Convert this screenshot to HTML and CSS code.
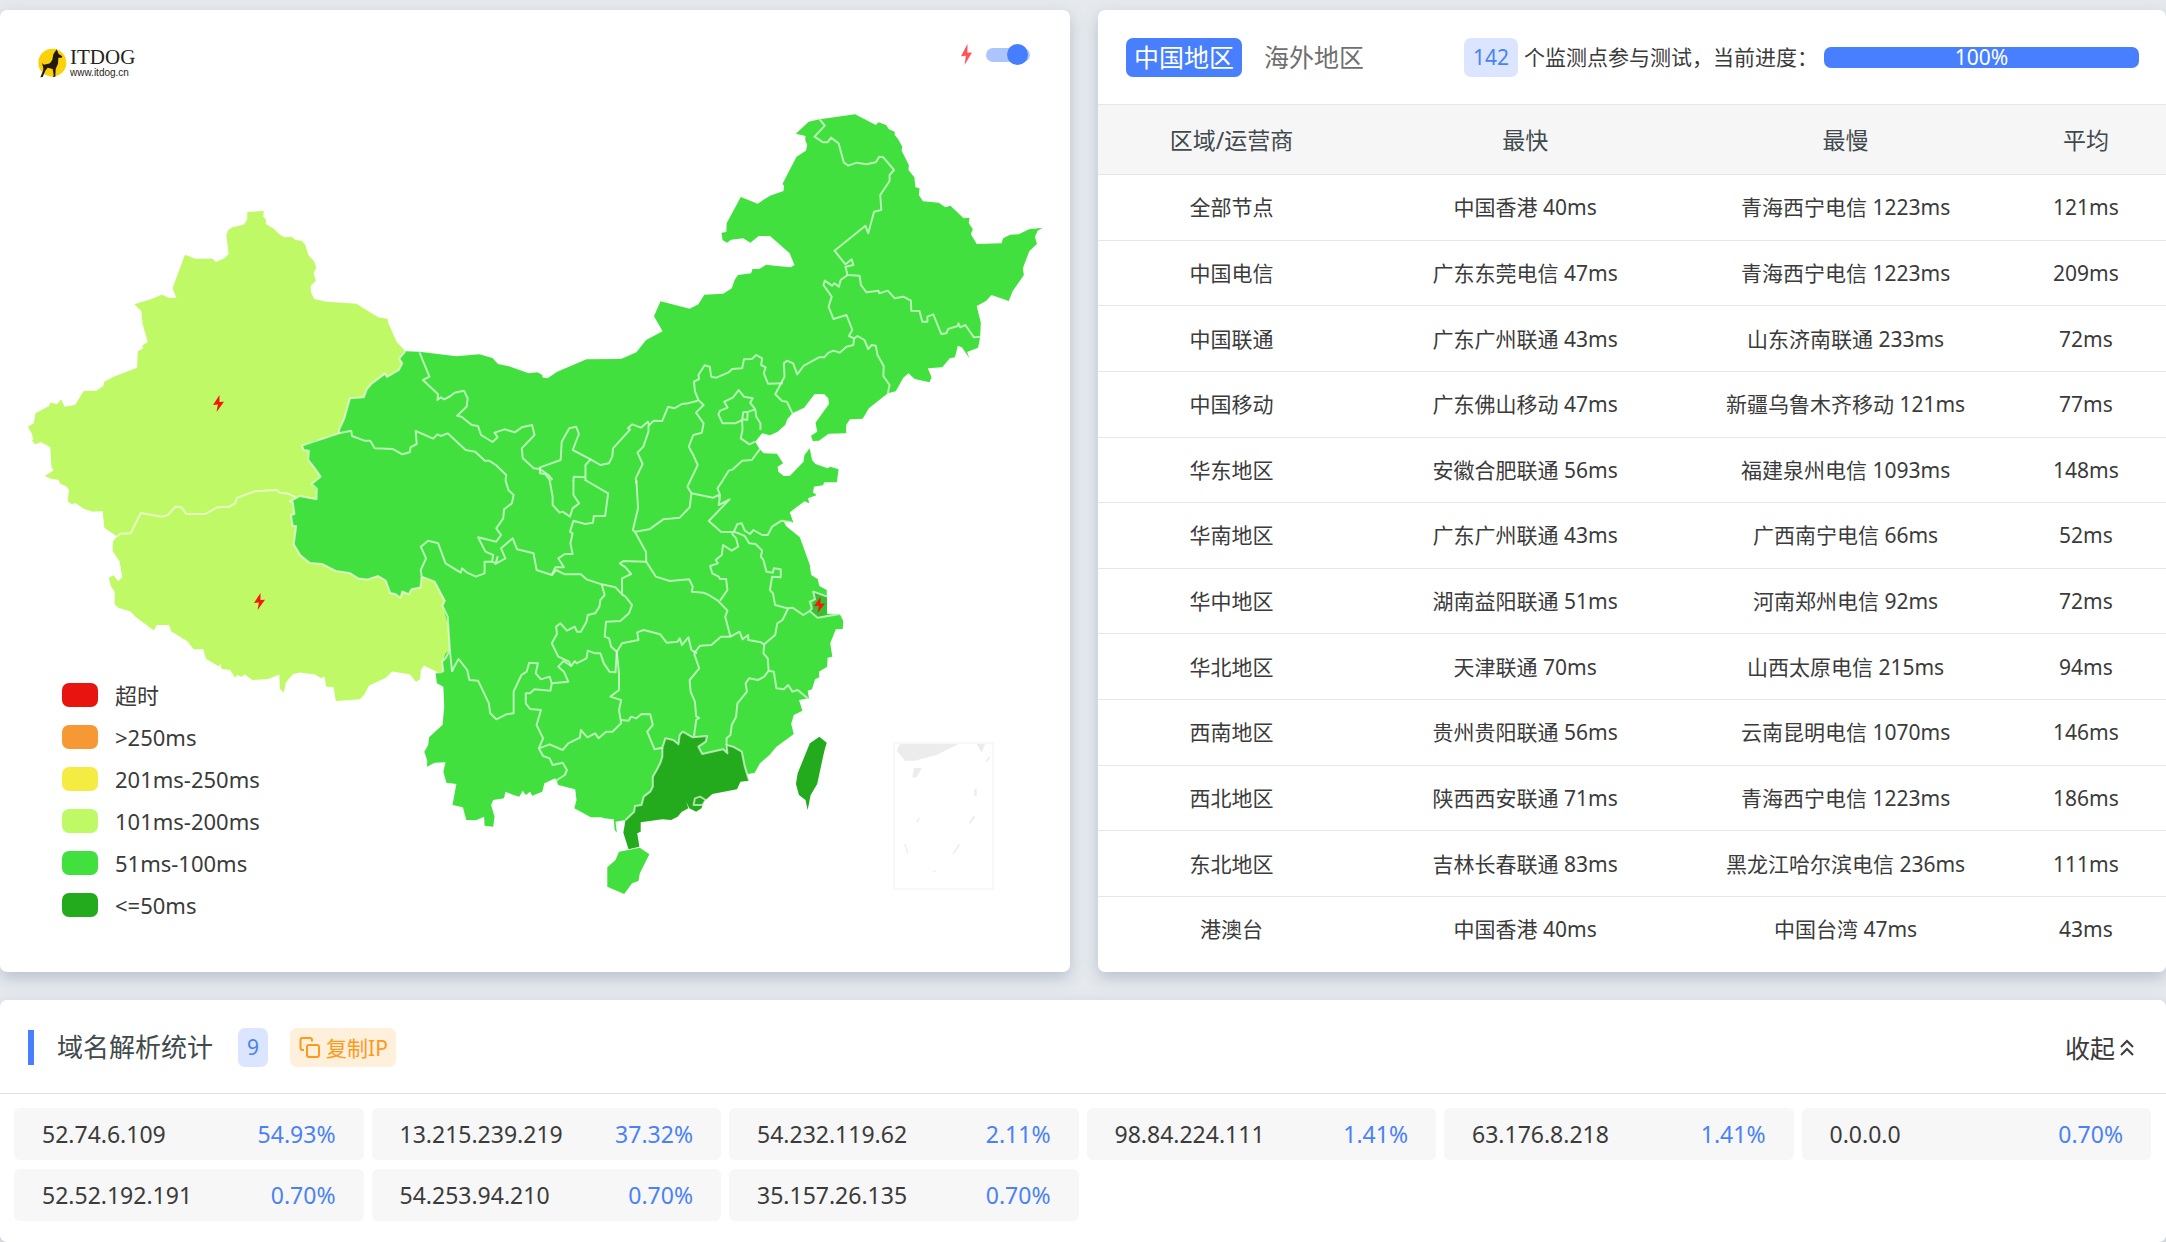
FILE: index.html
```html
<!DOCTYPE html>
<html lang="zh-CN">
<head>
<meta charset="utf-8">
<meta name="viewport" content="width=device-width, initial-scale=1">
<title>ITDOG 测速结果</title>
<link rel="stylesheet" href="styles.css">
</head>
<body>
<svg class="sprite" aria-hidden="true">
  <symbol id="bolt" viewBox="0 0 34 65" preserveAspectRatio="none"><path d="M20 0 0 38 15 36 11 65 34 26 20 27Z"/></symbol>
</svg>
<main class="page">
  <div class="top">
    <section class="card map-card">
      <svg class="map" viewBox="0 10 1070 962" role="img" aria-label="中国地区延迟地图">
        <!-- provinces at 101-200ms -->
        <g class="lime">
          <path transform="scale(.34439 .33333)" d="M718 636 766 633 764 650 772 658 772 672 795 686 810 702 825 712 848 711 858 720 876 722 886 734 895 764 912 784 918 803 911 820 917 842 902 858 903 877 912 897 948 905 1035 911 1058 926 1098 952 1125 956 1127 968 1152 1026 1177 1054 1159 1076 1168 1090 1158 1110 1124 1131 1118 1121 1080 1150 1065 1168 1056 1192 1016 1195 1000 1255 985 1288 984 1300 877 1337 882 1350 897 1352 895 1380 912 1402 931 1430 905 1452 920 1466 919 1500 197 1500 201 1470 193 1456 176 1452 170 1440 150 1436 131 1427 145 1418 160 1408 150 1397 147 1341 118 1325 100 1332 92 1300 81 1280 98 1270 103 1240 143 1218 145 1208 166 1212 178 1198 187 1220 218 1215 243 1173 280 1172 300 1158 303 1145 330 1130 398 1103 400 1054 415 1046 413 1037 429 1026 414 972 410 932 390 913 440 897 470 884 492 894 512 893 501 865 537 764 567 776 617 776 627 786 652 775 664 762 657 705 663 690 675 682 708 674 718 658Z"/>
          <path transform="translate(0 440) scale(.34439)" d="M92 0 103 12 118 6 146 20 150 80 158 90 145 100 130 104 147 112 171 114 178 128 192 134 201 145 197 178 207 186 220 184 245 200 270 208 298 206 303 255 340 280 328 295 327 322 347 352 355 398 343 410 330 393 316 400 322 425 333 440 333 478 345 488 378 497 395 515 447 553 455 537 491 537 497 555 545 585 563 608 590 607 598 635 636 658 640 648 643 664 668 668 683 690 688 682 702 688 710 680 733 697 778 694 811 681 813 722 824 734 830 705 850 680 870 675 915 681 933 692 942 686 947 716 969 718 975 758 1045 753 1058 738 1072 713 1120 690 1138 672 1190 680 1208 702 1220 695 1222 668 1231 655 1262 670 1280 678 1286 668 1283 655 1288 630 1298 625 1306 605 1300 512 1285 485 1294 466 1262 410 1224 398 1221 428 1195 433 1187 448 1168 440 1163 458 1148 447 1133 444 1120 408 1098 395 1068 405 1040 402 1015 386 975 380 935 360 900 357 872 335 853 303 860 250 850 250 845 218 855 215 850 180 842 178 870 163 919 172 919 145 905 130 931 104 897 60 895 30 877 16 917 0Z"/>
        </g>
        <!-- provinces at 51-100ms -->
        <g class="green">
          <path transform="scale(.34439 .33333)" d="M1177 1054 1218 1055 1325 1069 1392 1063 1430 1074 1446 1092 1482 1100 1535 1120 1560 1117 1575 1125 1575 1510 919 1510 920 1466 905 1452 931 1430 912 1402 895 1380 897 1352 882 1350 877 1337 984 1300 985 1288 1000 1255 1016 1195 1056 1192 1065 1168 1080 1150 1118 1121 1124 1131 1158 1110 1168 1090 1159 1076Z"/>
          <path transform="translate(0 440) scale(.34439)" d="M1568 0 917 0 877 16 895 30 897 60 931 104 905 130 919 145 919 172 870 163 842 178 850 180 855 215 845 218 850 250 860 250 853 303 872 335 900 357 935 360 975 380 1015 386 1040 402 1068 405 1098 395 1120 408 1133 444 1148 447 1163 458 1168 440 1187 448 1195 433 1221 428 1224 398 1300 400 1568 400Z"/>
          <path transform="translate(540 80) scale(.34439 .33333)" d="M-5 890 22 895 50 875 135 838 235 837 280 817 308 780 356 754 331 709 350 664 435 686 460 673 477 644 532 641 557 625 565 600 575 585 613 580 617 567 637 567 657 554 688 558 728 562 739 555 725 520 668 468 635 468 611 488 590 475 555 479 543 488 530 480 527 458 541 456 542 430 583 351 632 371 668 347 707 333 709 317 704 312 720 280 745 230 772 212 776 195 770 180 771 168 743 161 780 125 812 118 915 103 975 135 983 127 1005 135 1013 148 1030 155 1030 165 1040 178 1052 200 1050 212 1071 255 1070 270 1087 292 1090 322 1102 325 1100 345 1112 364 1158 368 1177 382 1192 377 1230 415 1247 413 1245 430 1257 448 1251 462 1268 492 1340 490 1345 475 1365 464 1390 463 1420 448 1460 443 1445 452 1437 470 1443 492 1421 513 1402 565 1405 585 1385 615 1373 632 1361 663 1311 645 1295 663 1268 678 1280 728 1278 772 1272 803 1240 816 1247 835 1225 802 1213 797 1205 832 1190 835 1168 862 1126 865 1137 892 1131 907 1088 897 1070 880 1055 893 1033 934 1010 940 955 985 937 1016 900 1018 889 1035 889 1060 838 1061 810 1082 792 1083 787 1067 805 1055 800 1028 839 972 837 955 825 942 797 943 767 983 733 1000 718 1018 712 1035 690 1055 668 1066 645 1060 625 1085 638 1108 650 1120 688 1121 706 1150 690 1160 692 1175 708 1188 726 1187 765 1145 768 1125 783 1105 790 1140 800 1152 835 1165 843 1160 867 1168 862 1207 825 1207 822 1216 793 1220 792 1237 802 1246 778 1255 782 1270 770 1262 725 1297 735 1327 708 1325 718 1350 -5 1350Z"/>
          <path transform="translate(400 480) scale(.43367 .33333)" d="M0 0 950 0 955 18 952 38 960 44 935 55 944 70 930 62 898 97 906 127 885 126 890 138 922 172 945 255 948 285 963 297 967 318 984 330 985 401 1014 402 1022 422 1021 447 1005 448 992 490 997 530 986 533 985 560 966 575 967 592 957 598 950 628 940 632 943 655 920 660 928 692 908 705 902 732 908 762 887 782 868 800 852 825 830 850 818 878 803 882 600 900 560 975 520 1020 497 1025 500 1058 495 1050 493 1018 470 1015 465 1012 440 1012 402 985 407 960 404 928 365 915 358 895 333 910 328 935 305 947 300 935 290 945 283 932 275 950 262 945 243 935 240 955 215 960 210 975 218 1010 215 1040 195 1037 194 1010 175 1021 153 1020 145 982 121 975 130 912 107 908 100 875 105 847 80 848 62 860 63 842 56 815 65 795 67 772 98 735 102 680 100 620 85 610 82 580 95 580 100 575 97 550 105 520 115 510 112 440 98 375 105 362 80 305 50 290 50 200 0 150Z"/>
          <path transform="translate(400 480) scale(.43367 .33333)" d="M505 1115 553 1103 575 1123 553 1180 550 1203 535 1210 517 1242 478 1220 478 1162 497 1140Z"/>
        </g>
        <!-- provinces at 50ms or less -->
        <g class="dark" transform="translate(400 480) scale(.43367 .33333)">
          <path d="M605 803 612 775 630 780 642 793 645 765 652 755 675 772 708 768 705 785 688 800 697 822 745 808 755 820 753 795 768 800 788 815 795 860 805 902 785 905 777 928 720 942 703 962 695 985 683 995 667 985 660 965 665 985 650 995 640 1010 625 1020 605 1018 555 1027 555 1055 547 1060 552 1100 527 1108 515 1058 520 1020 540 995 542 978 557 975 562 950 577 935 583 920 583 890 592 870 600 850 605 830Z"/>
          <path d="M967 770 984 788 978 815 962 912 947 945 940 990 935 960 920 945 913 912 917 880 945 790Z"/>
        </g>
        <path class="shanghai" transform="translate(400 480) scale(.43367 .33333)" d="M953 335 985 350 984 405 963 413 945 393 957 358Z"/>
        <!-- province borders -->
        <g class="borders">
          <g transform="scale(.34439 .33333)">
            <path d="M1177 1054 1159 1076 1168 1090 1158 1110 1124 1131 1118 1121 1080 1150 1065 1168 1056 1192 1016 1195 1000 1255 985 1288 984 1300 877 1337 882 1350 897 1352 895 1380 912 1402 931 1430 905 1452 920 1466 919 1498 870 1488"/>
            <path d="M1218 1057 1247 1130 1228 1140 1272 1183 1270 1200 1280 1192 1290 1198 1308 1188 1320 1178 1347 1172 1358 1195 1355 1220 1327 1247 1340 1250 1370 1275 1388 1278 1397 1305 1430 1326 1445 1312 1436 1298 1465 1288 1495 1297 1515 1282 1545 1275 1552 1305 1515 1345 1518 1375 1550 1405 1568 1407 1592 1425 1604 1440"/>
            <path d="M984 1300 1020 1292 1022 1308 1058 1322 1075 1322 1088 1345 1140 1347 1168 1363 1190 1357 1192 1342 1210 1332 1207 1293 1258 1316 1270 1303 1280 1308 1300 1300 1352 1350 1380 1355 1408 1382 1420 1382 1440 1395 1470 1425 1468 1440"/>
          </g>
          <g transform="translate(0 440) scale(.34439)">
            <path d="M340 280 350 272 379 271 409 212 470 223 487 218 510 193 528 196 540 214 595 215 632 195 665 194 683 183 688 168 740 149 803 145 812 153 835 155 858 166"/>
            <path d="M870 163 842 178 850 180 855 215 845 218 850 250 860 250 853 303 872 335 900 357 935 360 975 380 1015 386 1040 402 1068 405 1098 395 1120 408 1133 444 1148 447 1163 458 1168 440 1187 448 1195 433 1221 428 1224 398"/>
          </g>
          <g transform="translate(540 80) scale(.34439 .33333)">
            <path d="M812 118 827 137 797 170 822 187 835 187 845 173 867 190 882 247 895 257 920 248 948 253 975 247 985 230 997 232 1028 270 1015 285 1015 303 988 345 991 390 970 395 953 460 945 437 855 512 887 553 905 538 910 555 887 560 893 585 928 587 932 615 948 637 983 632 985 640 1010 632 1030 655 1055 650 1077 662 1078 692 1102 693 1110 725 1125 725 1125 710 1142 703 1165 762 1180 760 1185 747 1213 738 1215 730 1220 742 1235 735 1260 772 1280 770"/>
            <path d="M893 585 873 600 868 620 855 610 848 617 827 602 823 615 847 650 838 680 852 717 890 705 907 750 897 768 912 775 922 768 942 780 953 807 963 795 975 797 980 825 998 858 997 888 1015 915 1010 940"/>
            <path d="M912 775 910 795 890 800 870 818 852 812 838 818 825 832 810 832 765 858 747 883 735 850 717 842 708 850 710 890 683 943 703 963 717 965 733 1000"/>
            <path d="M705 910 662 911 650 880 655 862 642 855 645 835 628 825 615 837 592 838 587 865 558 867 548 877 512 893 497 890 493 860 478 856 460 885 462 897 447 905 450 935 460 960 475 975 453 998 475 1030 470 1058 445 1065 432 1100 445 1125 458 1155 428 1220 440 1240"/>
            <path d="M458 962 430 970 412 972 390 985 372 980 355 1023 330 1022 317 1035 313 1025 293 1043 268 1033 255 1045 262 1048 212 1105 210 1130 200 1150 175 1155 147 1138 95 1110 113 1062 105 1040 85 1045 63 1085 60 1140 0 1162 0 1180 15 1182 28 1200"/>
            <path d="M315 1035 315 1055 300 1100 283 1118 298 1152 278 1195 280 1210M147 1138 132 1155 132 1203M132 1192 98 1190 97 1202M638 1108 615 1140 587 1142 560 1168 548 1172 531 1200"/>
            <path d="M577 930 592 950 618 955 610 968 625 988 605 995 590 997 587 1020 567 1030 530 1030 518 1003 523 992 545 983 535 965 560 953ZM625 988 628 1010 640 1030 640 1050M587 1020 588 1050 583 1075 608 1093 625 1085M603 995 602 1020 590 1018"/>
          </g>
          <g transform="translate(400 480) scale(.43367 .33333)">
            <path d="M243 0 250 30 262 45 258 70 240 88 238 115 222 145 233 165 222 185 180 172 197 215 215 225 212 245 195 245 195 280 175 290 155 278 143 265 140 278 105 250 88 190 65 182 48 200 60 235 48 270 50 290 80 305 103 362 98 378 110 410 115 510 120 575M115 510 105 535 97 545 100 575"/>
            <path d="M212 245 222 250 225 230 220 252 243 235 233 205 260 175 270 208 308 220 315 270 350 285 358 262 378 262 365 235 380 222 398 222 393 190 398 160 392 155 400 122 427 132 445 128 447 108 473 108 480 40 427 0"/>
            <path d="M345 0 352 50 352 75 368 98 375 95 392 110 398 85 413 70 400 45 400 0"/>
            <path d="M350 285 360 270 380 283 417 283 430 298 465 313 497 322 512 343 512 295 533 282 520 262 507 250 515 243 568 245"/>
            <path d="M545 0 549 85 537 150 543 158 553 182 567 215 568 245 590 290 622 303 667 298 675 320 673 335 700 338 712 345 733 362 755 392 750 410 762 470"/>
            <path d="M543 155 575 148 607 118 645 113 668 82 672 40 722 53 735 45 738 60M745 0 732 25 738 45 735 75 760 58 712 123 740 155 775 157"/>
            <path d="M770 155 778 132 788 130 795 152 807 162 815 150 835 165 848 165 858 140 880 122 903 127"/>
            <path d="M765 160 775 175 780 200 765 212 745 195 742 225 728 240 733 250 715 258 720 280 735 290 738 297 752 297 755 330 738 362"/>
            <path d="M775 157 795 168 805 190 820 192 835 212 832 230 838 240 845 275 860 278 862 265 878 268 878 292 858 290 853 330 860 340 865 375 893 385 905 383 930 405 945 393 950 385 945 365 957 358 953 335 985 350M945 393 963 413 1014 402"/>
            <path d="M895 385 882 420 870 430 865 465 840 493 832 487 803 480 803 465 790 478 783 455 762 470 740 470 718 495 692 497 678 520"/>
            <path d="M500 515 512 490 550 480 547 457 562 450 600 463 615 488 640 485 645 475 650 495 665 472 672 510 685 520M678 520 690 565 668 600 670 635 680 665 683 710 690 713 683 720 678 768"/>
            <path d="M840 493 838 520 848 535 850 572 840 590 825 600 805 595 797 610 800 635 778 670 775 710 765 735 762 765 753 775 753 795M850 572 862 575 868 625 885 628 895 615 905 635 917 630 940 655"/>
            <path d="M465 313 472 345 462 360 460 380 450 400 433 405 430 425 417 455 408 455 403 440 385 452 370 430 360 440 362 462 350 490 365 530 390 545 395 558 403 543 407 550 430 535 433 512 450 520 462 520 470 550 483 575 497 577 500 510"/>
            <path d="M512 343 520 350 535 375 528 400 508 423 475 425 472 470 482 475 487 500 500 515 505 580 505 630 485 650 510 660 505 690 510 730 490 755 475 755 458 775 450 760 432 772 417 750 415 773 388 790 375 810 345 793 320 805"/>
            <path d="M395 558 377 543 365 560 378 575 383 590 388 605 350 610 345 590 325 598 313 580 318 550 298 548 292 575 280 585 262 635 262 700 245 703 222 718 208 700 205 670 180 602 160 600 155 570 135 537 125 560 120 575"/>
            <path d="M350 610 347 632 310 628 300 640 290 640 290 670 300 687 325 690 315 735 330 775 320 805 330 828 345 835 352 855 375 848 385 870 380 885 362 900 358 912"/>
            <path d="M510 720 527 722 533 710 545 715 557 702 577 703 583 735 570 755 587 808 605 803 612 775 630 780 642 793 645 765 652 755 675 772 708 768 705 785 688 800 697 822 745 808 755 820 753 795 768 800 788 815 795 860 805 902"/>
            <path d="M605 803 605 830 600 850 592 870 583 890 583 920 577 935 562 950 557 975 542 978 540 995 520 1020M677 975 680 955 692 950 705 960 697 975Z"/>
          </g>
        </g>
        <!-- South China Sea inset -->
        <rect class="inset" x="894" y="743" width="99" height="146"/>
        <path class="islands" transform="translate(870 730) scale(.33333)" d="M90 42 265 42 200 75 135 92 105 92 80 62ZM320 42H345L335 68ZM132 114H155L140 142 127 143ZM313 176H320V198H313ZM312 256 315 262 302 280 296 280ZM146 264 150 266 142 277 138 275ZM102 342 107 343 115 370 111 370ZM266 342 270 344 252 372 247 372ZM358 78 360 84 350 96 347 94ZM186 422H198V425H190Z"/>
        <g class="bolts">
          <use href="#bolt" x="213" y="395" width="11" height="17"/>
          <use href="#bolt" x="254" y="593" width="11" height="17"/>
          <use href="#bolt" x="814" y="597" width="11" height="16"/>
        </g>
      </svg>
      <a class="logo" href="#">
        <svg class="logo-mark" viewBox="24 22 87 88" aria-hidden="true"><circle cx="67" cy="65" r="42" fill="#fbd10a"/><path fill="#221a10" d="M80 25 86 39 97 46 95 50 85 50 84 68 77 84 76 107 69 108 71 102 68 84 53 80 46 89 38 108 31 109 39 90 40 82 36 66 42 71 60 67 67 56 70 40Z"/></svg>
        <span class="logo-text"><span class="logo-name">ITDOG</span><span class="logo-url">www.itdog.cn</span></span>
      </a>
      <label class="toggle">
        <svg class="toggle-bolt" aria-hidden="true"><use href="#bolt"/></svg>
        <input class="switch" type="checkbox" role="switch" aria-label="显示最慢节点" checked>
      </label>
      <ul class="legend">
        <li><i class="swatch timeout"></i>超时</li>
        <li><i class="swatch over250"></i>&gt;250ms</li>
        <li><i class="swatch to250"></i>201ms-250ms</li>
        <li><i class="swatch to200"></i>101ms-200ms</li>
        <li><i class="swatch to100"></i>51ms-100ms</li>
        <li><i class="swatch to50"></i>&lt;=50ms</li>
      </ul>
    </section>

    <section class="card stats-card">
      <header class="stats-head">
        <nav class="tabs">
          <button class="tab active" type="button">中国地区</button>
          <button class="tab" type="button">海外地区</button>
        </nav>
        <div class="progress-info">
          <span class="badge">142</span>
          <span>个监测点参与测试，当前进度：</span>
        </div>
        <div class="progress" role="progressbar" aria-valuenow="100" aria-label="当前进度"><div class="bar" style="width:100%">100%</div></div>
      </header>
      <table class="stats">
        <thead><tr><th class="c1">区域/运营商</th><th class="c2">最快</th><th class="c2">最慢</th><th class="c3">平均</th></tr></thead>
        <tbody>
          <tr><td>全部节点</td><td>中国香港 40ms</td><td>青海西宁电信 1223ms</td><td>121ms</td></tr>
          <tr><td>中国电信</td><td>广东东莞电信 47ms</td><td>青海西宁电信 1223ms</td><td>209ms</td></tr>
          <tr><td>中国联通</td><td>广东广州联通 43ms</td><td>山东济南联通 233ms</td><td>72ms</td></tr>
          <tr><td>中国移动</td><td>广东佛山移动 47ms</td><td>新疆乌鲁木齐移动 121ms</td><td>77ms</td></tr>
          <tr><td>华东地区</td><td>安徽合肥联通 56ms</td><td>福建泉州电信 1093ms</td><td>148ms</td></tr>
          <tr><td>华南地区</td><td>广东广州联通 43ms</td><td>广西南宁电信 66ms</td><td>52ms</td></tr>
          <tr><td>华中地区</td><td>湖南益阳联通 51ms</td><td>河南郑州电信 92ms</td><td>72ms</td></tr>
          <tr><td>华北地区</td><td>天津联通 70ms</td><td>山西太原电信 215ms</td><td>94ms</td></tr>
          <tr><td>西南地区</td><td>贵州贵阳联通 56ms</td><td>云南昆明电信 1070ms</td><td>146ms</td></tr>
          <tr><td>西北地区</td><td>陕西西安联通 71ms</td><td>青海西宁电信 1223ms</td><td>186ms</td></tr>
          <tr><td>东北地区</td><td>吉林长春联通 83ms</td><td>黑龙江哈尔滨电信 236ms</td><td>111ms</td></tr>
          <tr><td>港澳台</td><td>中国香港 40ms</td><td>中国台湾 47ms</td><td>43ms</td></tr>
        </tbody>
      </table>
    </section>
  </div>

  <section class="card dns-card">
    <header class="dns-head">
      <h2>域名解析统计</h2>
      <span class="badge">9</span>
      <button class="copy" type="button">
        <svg viewBox="0 0 21 21" width="21" height="21" fill="none" stroke="currentColor" stroke-width="2" aria-hidden="true"><rect x="8" y="8" width="12" height="12" rx="2"/><path d="M5 13H3.500Q1.500 13 1.500 11V3Q1.500 1 3.500 1H11Q13 1 13 3V4.500"/></svg>
        复制IP
      </button>
      <button class="collapse" type="button">收起
        <svg viewBox="0 0 14 18" width="14" height="18" fill="none" stroke="currentColor" stroke-width="2" aria-hidden="true"><path d="M1 8 7 2 13 8M1 16 7 10 13 16"/></svg>
      </button>
    </header>
    <ul class="ips">
      <li><span>52.74.6.109</span><b>54.93%</b></li>
      <li><span>13.215.239.219</span><b>37.32%</b></li>
      <li><span>54.232.119.62</span><b>2.11%</b></li>
      <li><span>98.84.224.111</span><b>1.41%</b></li>
      <li><span>63.176.8.218</span><b>1.41%</b></li>
      <li><span>0.0.0.0</span><b>0.70%</b></li>
      <li><span>52.52.192.191</span><b>0.70%</b></li>
      <li><span>54.253.94.210</span><b>0.70%</b></li>
      <li><span>35.157.26.135</span><b>0.70%</b></li>
    </ul>
  </section>
</main>
</body>
</html>
```
FILE: styles.css
```css
* { box-sizing: border-box; }
body {
  margin: 0;
  background: #e6eaee;
  color: #3b3b3b;
  font: 400 21px/30px "Noto Sans", "Noto Sans CJK SC", sans-serif;
}
button { border: 0; background: none; font: inherit; color: inherit; cursor: pointer; }
ul { margin: 0; padding: 0; list-style: none; }
.sprite { display: none; }
.page { padding-top: 10px; }
.card {
  background: #fff;
  border-radius: 7px;
  box-shadow: 0 6px 16px rgba(80, 95, 125, .3);
}
.top {
  display: grid;
  grid-template-columns: 1070fr 1068fr;
  gap: 28px;
}

/* map */
.map-card { position: relative; }
.map { display: block; width: 100%; }
.lime { fill: #bff966; }
.green { fill: #42e03e; }
.dark { fill: #24aa1d; }
.shanghai { fill: #38bf34; }
.borders path {
  fill: none;
  stroke: rgba(255, 255, 255, .62);
  stroke-width: 2px;
  stroke-linejoin: round;
  vector-effect: non-scaling-stroke;
}
.inset { fill: none; stroke: #f8f8f8; stroke-width: 2px; }
.islands { fill: #ececec; }
.bolts { fill: #f5190c; }

.logo {
  position: absolute;
  left: 38px;
  top: 37px;
  display: flex;
  align-items: center;
  gap: 3px;
  color: #272320;
  text-decoration: none;
}
.logo-mark { width: 29px; height: 30px; }
.logo-text { display: flex; flex-direction: column; }
.logo-name { font: 21px/21px "Liberation Serif", serif; }
.logo-url { font: 10px/10px "Liberation Sans", sans-serif; }

.toggle {
  position: absolute;
  right: 40px;
  top: 34px;
  display: flex;
  align-items: center;
  gap: 14px;
}
.toggle-bolt { width: 11px; height: 21px; fill: #ff5358; }
.switch {
  appearance: none;
  position: relative;
  width: 44px;
  height: 14px;
  margin: 0;
  border-radius: 7px;
  background: #adc5ff;
}
.switch::after {
  content: "";
  position: absolute;
  right: 2px;
  top: -4px;
  width: 21px;
  height: 21px;
  border-radius: 50%;
  background: #467ffd;
}

.legend { position: absolute; left: 62px; bottom: 46px; font-size: 22px; }
.legend li { display: flex; align-items: center; gap: 17px; height: 42px; }
.swatch { width: 36px; height: 24px; border-radius: 7px; }
.timeout { background: #e8140f; }
.over250 { background: #f69833; }
.to250 { background: #f4ec42; }
.to200 { background: #bff966; }
.to100 { background: #42e03e; }
.to50 { background: #24aa1d; }

/* statistics */
.stats-card { display: flex; flex-direction: column; padding-bottom: 10px; }
.stats-head {
  display: flex;
  align-items: center;
  height: 94px;
  padding: 0 27px 0 28px;
}
.tabs { display: flex; gap: 14px; }
.tab {
  height: 39px;
  padding: 0 8px;
  border-radius: 7px;
  font-size: 25px;
  line-height: 39px;
  color: #6f6f6f;
}
.tab.active { background: #477ffe; color: #fff; }
.progress-info { display: flex; align-items: center; gap: 6px; margin-left: auto; }
.badge {
  height: 39px;
  padding: 0 9px;
  border-radius: 7px;
  background: #dce5ff;
  color: #4a82f5;
  line-height: 39px;
}
.progress { width: 315px; margin-left: 6px; }
.bar {
  border-radius: 7px;
  background: #477ffe;
  color: #fff;
  line-height: 21px;
  text-align: center;
}
.stats { flex: 1; width: 100%; border-collapse: collapse; table-layout: fixed; text-align: center; }
.stats th {
  height: 70px;
  padding: 0;
  background: #f6f6f6;
  border-top: 1px solid #e4e7e7;
  font-size: 23px;
  font-weight: 400;
  color: #40494c;
}
.stats td { height: 65px; padding: 0; border-top: 1px solid #e4e7e7; }
.c1 { width: 25%; }
.c2 { width: 30%; }
.c3 { width: 15%; }

/* resolved addresses */
.dns-card { margin-top: 28px; padding-bottom: 21px; }
.dns-head {
  display: flex;
  align-items: center;
  height: 94px;
  padding: 2px 32px 0 28px;
  border-bottom: 1px solid #e0e2e4;
}
.dns-head h2 {
  margin: 0 25px 0 0;
  padding-left: 23px;
  border-left: 6px solid #477ffe;
  font-size: 26px;
  line-height: 35px;
  font-weight: 400;
  color: #40494c;
}
.copy {
  display: flex;
  align-items: center;
  gap: 6px;
  height: 39px;
  margin-left: 22px;
  padding: 0 8px 0 9px;
  border-radius: 7px;
  background: #fff0dc;
  color: #fc9a1c;
}
.collapse {
  display: flex;
  align-items: center;
  gap: 5px;
  margin-left: auto;
  padding: 0;
  font-size: 25px;
}
.ips {
  display: grid;
  grid-template-columns: repeat(6, 1fr);
  gap: 9px 8px;
  padding: 14px 15px 0 14px;
}
.ips li {
  display: flex;
  justify-content: space-between;
  height: 52px;
  padding: 0 28px;
  border-radius: 6px;
  background: #f7f7f7;
  font-size: 23px;
  line-height: 52px;
}
.ips b { font-weight: 400; color: #4a82f5; }
```
